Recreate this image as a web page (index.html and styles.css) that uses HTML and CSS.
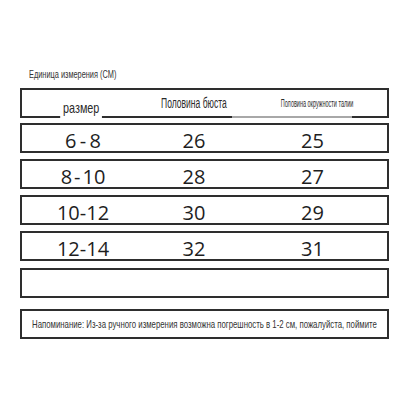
FILE: index.html
```html
<!DOCTYPE html>
<html lang="ru">
<head>
<meta charset="utf-8">
<title>Размеры</title>
<link rel="stylesheet" href="styles.css">
</head>
<body>
<div class="page">
  <div class="title"><span class="narrow">Единица измерения (CM)</span></div>
  <div class="table">
    <div class="row head">
      <div class="cell cell-size"><span class="lbl lbl-size">размер</span></div>
      <div class="cell cell-bust"><span class="lbl lbl-bust">Половина бюста</span></div>
      <div class="cell cell-waist"><span class="lbl lbl-waist">Половина окружности талии</span></div>
      <i class="fade"></i>
    </div>
    <div class="row data">
      <div class="cell">6&#8201;-&#8201;8</div>
      <div class="cell">26</div>
      <div class="cell">25</div>
    </div>
    <div class="row data">
      <div class="cell">8&#8202;-&#8202;10</div>
      <div class="cell">28</div>
      <div class="cell">27</div>
    </div>
    <div class="row data">
      <div class="cell">10-12</div>
      <div class="cell">30</div>
      <div class="cell">29</div>
    </div>
    <div class="row data last">
      <div class="cell">12-14</div>
      <div class="cell">32</div>
      <div class="cell">31</div>
    </div>
    <div class="row empty"></div>
    <div class="row note"><span class="narrow note-text">Напоминание: Из-за ручного измерения возможна погрешность в 1-2 см, пожалуйста, поймите</span></div>
  </div>
</div>
</body>
</html>
```

FILE: styles.css
```css
html, body {
  margin: 0;
  padding: 0;
  background: #ffffff;
}

body {
  font-family: "Liberation Sans", Arial, sans-serif;
  color: #2a2a2a;
}

.page {
  width: 369px;
  padding: 68px 0 0 20px;
}

.title {
  height: 13px;
  line-height: 13px;
  font-size: 11px;
  padding-left: 9px;
  color: #333;
  white-space: nowrap;
  overflow: hidden;
}

.narrow {
  display: inline-block;
  white-space: nowrap;
  transform-origin: left center;
}

.title .narrow {
  transform: scaleX(0.67);
}

.table {
  margin-top: 7px;
  display: flex;
  flex-direction: column;
}

.row {
  box-sizing: border-box;
  height: 30px;
  border: 2px solid #2e2e2e;
  display: grid;
  grid-template-columns: 122px 100px 143px;
  margin-bottom: 6px;
}

.head {
  position: relative;
  margin-bottom: 5px;
}

.head .cell {
  display: flex;
  justify-content: center;
}

.cell-size {
  align-items: flex-end;
}

.cell-bust,
.cell-waist {
  align-items: flex-start;
}

.lbl {
  display: inline-block;
  white-space: nowrap;
  transform-origin: center center;
}

.lbl-size {
  font-size: 15px;
  line-height: 14px;
  padding: 0 4px 3px 4px;
  margin-bottom: -2px;
  margin-right: 3px;
  background: #ffffff;
  position: relative;
  transform: scaleX(0.72);
}

.lbl-bust {
  font-size: 14px;
  line-height: 16px;
  margin-top: 5px;
  transform: scaleX(0.61);
}

.lbl-waist {
  font-size: 10px;
  line-height: 12px;
  margin-top: 8px;
  margin-left: 4px;
  transform: scaleX(0.55);
}

.fade {
  position: absolute;
  left: 210px;
  bottom: -2px;
  width: 120px;
  height: 2px;
  background: #a8a8a8;
}

.data .cell {
  font-family: "Open Sans", "Noto Sans", sans-serif;
  font-size: 20px;
  line-height: 21px;
  padding-top: 5px;
  text-align: center;
  color: #1e1e1e;
  white-space: nowrap;
}

.data .cell:nth-child(3) {
  padding-right: 6px;
}

.data.last {
  margin-bottom: 7px;
}

.empty {
  margin-bottom: 11px;
}

.note {
  display: block;
  padding-left: 10px;
  font-size: 11px;
  line-height: 26px;
  color: #333;
  margin-bottom: 0;
  overflow: hidden;
}

.note .narrow {
  transform: scaleX(0.71);
}
```
